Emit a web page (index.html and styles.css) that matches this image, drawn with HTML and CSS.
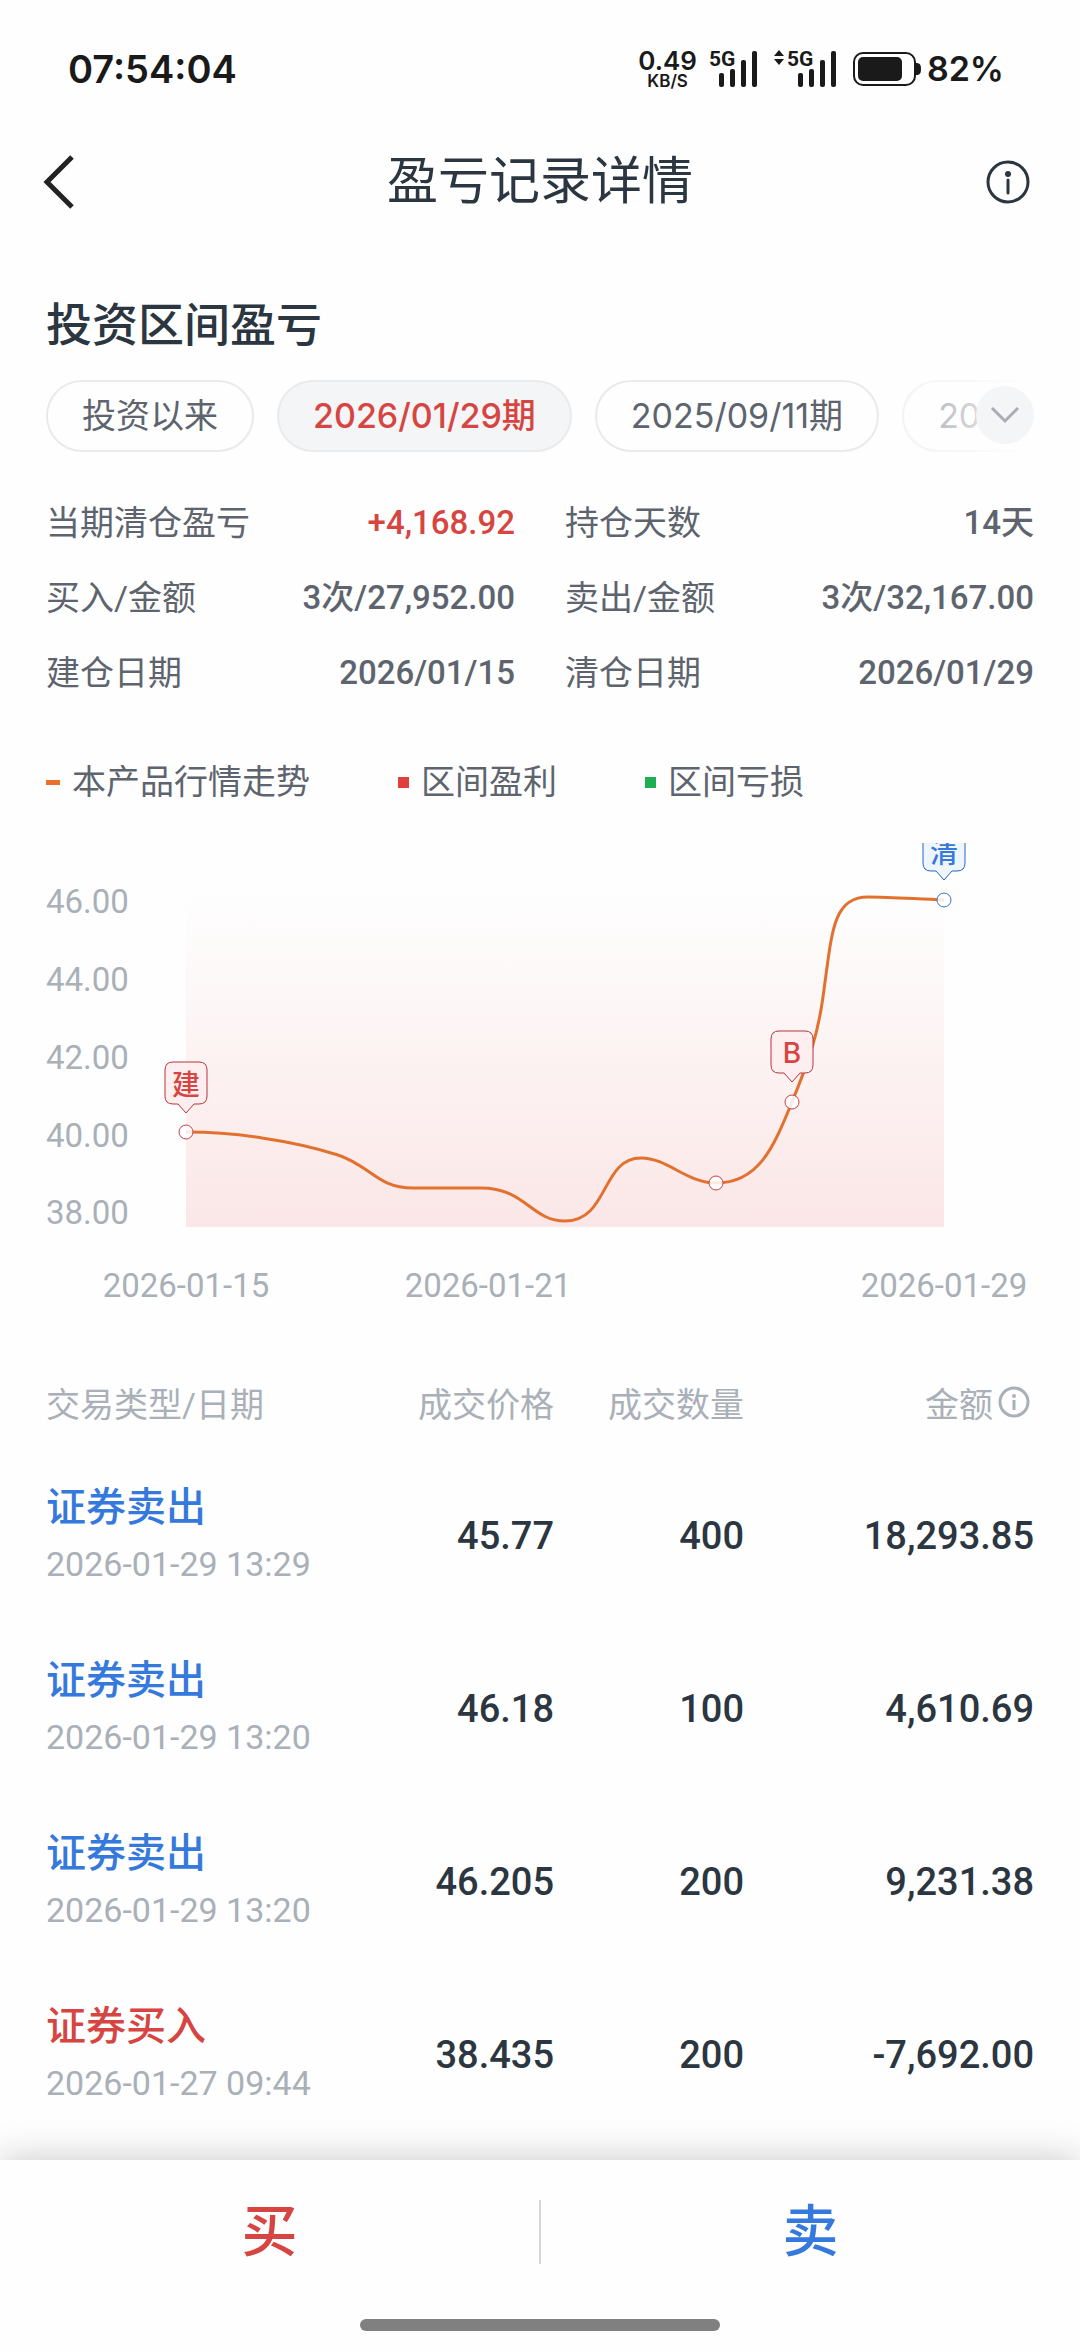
FILE: index.html
```html
<!DOCTYPE html>
<html lang="zh-CN">
<head>
  <meta charset="UTF-8">
  <meta name="viewport" content="width=device-width, initial-scale=1">
  <title>盈亏记录详情</title>
  <link rel="stylesheet" href="styles.css">
</head>
<body>

  <!-- Status bar -->
  <div class="status-bar">
    <span class="clock">07:54:04</span>
    <div class="status-right">
      <div class="speed"><span class="speed-num">0.49</span><span class="speed-unit">KB/S</span></div>
      <svg class="signal" width="49" height="38" viewBox="0 0 49 38">
        <text x="0" y="16">5G</text>
        <rect x="10" y="23" width="5" height="14" rx="2"/>
        <rect x="21" y="19" width="5" height="18" rx="2"/>
        <rect x="32" y="10" width="5" height="27" rx="2"/>
        <rect x="43" y="1" width="5" height="36" rx="2"/>
      </svg>
      <svg class="signal" width="63" height="38" viewBox="0 0 63 38">
        <path d="M5 0L10 6H0zM0 9H10L5 15z"/>
        <text x="13" y="16">5G</text>
        <rect x="24" y="23" width="5" height="14" rx="2"/>
        <rect x="35" y="19" width="5" height="18" rx="2"/>
        <rect x="46" y="10" width="5" height="27" rx="2"/>
        <rect x="57" y="1" width="5" height="36" rx="2"/>
      </svg>
      <svg class="battery" width="68" height="36" viewBox="0 0 68 36">
        <rect x="1" y="2" width="61" height="32" rx="9" fill="none" stroke="#1a1a1a" stroke-width="2"/>
        <rect x="5" y="6" width="44" height="24" rx="5"/>
        <path d="M63 12c4 0 5 2 5 6s-1 6-5 6z"/>
      </svg>
      <span class="percent">82%</span>
    </div>
  </div>

  <header class="header">
    <button type="button" class="icon-btn back" aria-label="返回">
      <svg width="34" height="56" viewBox="0 0 34 56" fill="none" stroke="#222" stroke-width="5"><path d="M30 3L5 28L30 53"/></svg>
    </button>
    <h1>盈亏记录详情</h1>
    <button type="button" class="icon-btn" aria-label="说明">
      <svg width="44" height="44" viewBox="0 0 44 44" fill="none" stroke="#2b3640" stroke-width="3"><circle cx="22" cy="22" r="20"/><path d="M22 20V33" stroke-linecap="round"/><circle cx="22" cy="14" r="3" fill="#2b3640" stroke="none"/></svg>
    </button>
  </header>

  <main class="content">
    <h2>投资区间盈亏</h2>

    <div class="periods">
      <div class="chips">
        <button type="button" class="chip">投资以来</button>
        <button type="button" class="chip active">2026/01/29期</button>
        <button type="button" class="chip">2025/09/11期</button>
        <button type="button" class="chip">2025/08/05期</button>
      </div>
      <div class="fade"></div>
      <button type="button" class="more" aria-label="更多">
        <svg width="30" height="18" viewBox="0 0 30 18" fill="none" stroke="#a9aeb5" stroke-width="3"><path d="M2 2L15 15L28 2"/></svg>
      </button>
    </div>

    <dl class="stats">
      <div><dt>当期清仓盈亏</dt><dd class="up">+4,168.92</dd></div>
      <div><dt>持仓天数</dt><dd>14天</dd></div>
      <div><dt>买入/金额</dt><dd>3次/27,952.00</dd></div>
      <div><dt>卖出/金额</dt><dd>3次/32,167.00</dd></div>
      <div><dt>建仓日期</dt><dd>2026/01/15</dd></div>
      <div><dt>清仓日期</dt><dd>2026/01/29</dd></div>
    </dl>

    <div class="legend">
      <span><i class="dash"></i>本产品行情走势</span>
      <span><i class="square red"></i>区间盈利</span>
      <span><i class="square green"></i>区间亏损</span>
    </div>

    <!-- Price chart -->
    <svg class="chart" viewBox="0 0 988 480">
      <defs>
        <linearGradient id="profit" x1="0" y1="0" x2="0" y2="1">
          <stop offset="0" stop-color="#e63c3c" stop-opacity="0"/>
          <stop offset="1" stop-color="#e63c3c" stop-opacity="0.12"/>
        </linearGradient>
      </defs>
      <rect x="140" y="50" width="758" height="334" fill="url(#profit)"/>

      <g class="axis">
        <text x="0" y="70">46.00</text>
        <text x="0" y="148">44.00</text>
        <text x="0" y="226">42.00</text>
        <text x="0" y="304">40.00</text>
        <text x="0" y="381">38.00</text>
      </g>
      <g class="axis axis-x">
        <text x="140" y="454">2026-01-15</text>
        <text x="442" y="454">2026-01-21</text>
        <text x="898" y="454">2026-01-29</text>
      </g>

      <path class="line" d="M140 289C165 289 191 291 216 295C250 300 270 305 292 312C325 323 331 345 367 345L435 345C480 345 485 378 519 378C563 378 555 315 595 315C622 315 640 340 670 340C712 340 727 306 746 259C764 215 772 190 777 154C786 90 786 54 822 54C845 54 870 56 898 57"/>

      <g class="dots">
        <circle cx="140" cy="289" r="7"/>
        <circle cx="670" cy="340" r="7"/>
        <circle cx="746" cy="259" r="7"/>
        <circle class="sell" cx="898" cy="57" r="7"/>
      </g>

      <g class="flag">
        <path d="M127 219h26q8 0 8 8v26q0 8-8 8h-5l-8 9l-8-9h-5q-8 0-8-8v-26q0-8 8-8z"/>
        <text x="140" y="252">建</text>
      </g>
      <g class="flag">
        <path d="M733 188h26q8 0 8 8v26q0 8-8 8h-5l-8 9l-8-9h-5q-8 0-8-8v-26q0-8 8-8z"/>
        <text x="746" y="220">B</text>
      </g>
      <g class="flag sell">
        <path d="M885-14h26q8 0 8 8v26q0 8-8 8h-5l-8 9l-8-9h-5q-8 0-8-8v-26q0-8 8-8z"/>
        <text x="898" y="20">清</text>
      </g>
    </svg>

    <table class="trades">
      <thead>
        <tr>
          <th>交易类型/日期</th>
          <th class="col-price">成交价格</th>
          <th class="col-count">成交数量</th>
          <th class="col-amount">
            <span class="amount-head">金额<svg width="32" height="32" viewBox="0 0 32 32" fill="none" stroke="#a9b0b8" stroke-width="3"><circle cx="16" cy="16" r="14"/><path d="M16 14V24"/><circle cx="16" cy="10" r="2" fill="#a9b0b8" stroke="none"/></svg></span>
          </th>
        </tr>
      </thead>
      <tbody>
        <tr>
          <td><div class="type sell">证券卖出</div><div class="date">2026-01-29 13:29</div></td>
          <td>45.77</td><td>400</td><td>18,293.85</td>
        </tr>
        <tr>
          <td><div class="type sell">证券卖出</div><div class="date">2026-01-29 13:20</div></td>
          <td>46.18</td><td>100</td><td>4,610.69</td>
        </tr>
        <tr>
          <td><div class="type sell">证券卖出</div><div class="date">2026-01-29 13:20</div></td>
          <td>46.205</td><td>200</td><td>9,231.38</td>
        </tr>
        <tr>
          <td><div class="type buy">证券买入</div><div class="date">2026-01-27 09:44</div></td>
          <td>38.435</td><td>200</td><td>-7,692.00</td>
        </tr>
      </tbody>
    </table>
  </main>

  <!-- Bottom actions -->
  <footer class="bottom-bar">
    <div class="actions">
      <button type="button" class="buy">买</button>
      <button type="button" class="sell">卖</button>
    </div>
    <div class="home-indicator"></div>
  </footer>

</body>
</html>
```
FILE: styles.css
```css
* {
  box-sizing: border-box;
}

body {
  margin: 0;
  padding-bottom: 192px;
  background: #fefefe;
  color: #5d646e;
  font-family: Roboto, "Noto Sans CJK SC", sans-serif;
  font-size: 34px;
}

h1, h2, dl, dd {
  margin: 0;
}

button {
  padding: 0;
  border: none;
  background: none;
  font-family: inherit;
  cursor: pointer;
}

svg {
  display: block;
}

/* Status bar */
.status-bar {
  display: flex;
  justify-content: space-between;
  align-items: center;
  height: 137px;
  padding: 0 76px 0 68px;
  color: #1a1a1a;
  font-family: Inter, sans-serif;
  font-weight: 600;
  font-size: 38px;
}

.status-right {
  display: flex;
  align-items: center;
}

.speed {
  display: flex;
  flex-direction: column;
  align-items: center;
  margin-right: 12px;
}

.speed-num {
  font-size: 26px;
  line-height: 24px;
}

.speed-unit {
  font-size: 17px;
  line-height: 16px;
}

.signal {
  margin-right: 16px;
  overflow: visible;
  fill: #1a1a1a;
  font-family: Roboto, sans-serif;
  font-weight: 700;
  font-size: 21px;
}

.battery {
  margin-right: 6px;
  fill: #1a1a1a;
}

.percent {
  font-size: 34px;
}

/* Header */
.header {
  display: flex;
  justify-content: space-between;
  align-items: center;
  height: 90px;
  padding: 0 42px;
}

.header h1 {
  color: #2b3640;
  font-size: 51px;
  font-weight: 400;
  line-height: 60px;
}

.icon-btn {
  display: flex;
  justify-content: center;
  width: 60px;
}

.icon-btn.back {
  justify-content: flex-start;
}

.content {
  padding: 0 46px;
}

h2 {
  margin: 68px 0 25px;
  color: #2b3640;
  font-size: 46px;
  font-weight: 500;
  line-height: 60px;
}

/* Period chips */
.periods {
  position: relative;
}

.chips {
  display: flex;
  gap: 23px;
  overflow: hidden;
}

.chip {
  flex: none;
  height: 72px;
  padding: 0 34px 6px;
  border: 2px solid #e9eaec;
  border-radius: 36px;
  color: #5d646e;
  font-family: Inter, "Noto Sans CJK SC", sans-serif;
  font-size: 34px;
}

.chip.active {
  background: #f4f5f7;
  color: #d64541;
  font-weight: 500;
}

.fade {
  position: absolute;
  top: 0;
  right: 0;
  width: 140px;
  height: 100%;
  background: linear-gradient(to right, rgba(254, 254, 254, 0.4), #fefefe);
}

.more {
  position: absolute;
  top: 6px;
  right: 0;
  display: flex;
  align-items: center;
  justify-content: center;
  width: 58px;
  height: 58px;
  border-radius: 50%;
  background: #f4f5f7;
}

/* Summary */
.stats {
  display: grid;
  grid-template-columns: 1fr 1fr;
  column-gap: 50px;
  margin-top: 33px;
}

.stats div {
  display: flex;
  justify-content: space-between;
  align-items: center;
  height: 75px;
}

.stats dt {
  padding-bottom: 5px;
}

.stats dd {
  font-size: 33px;
  font-weight: 500;
  line-height: 40px;
}

.stats .up {
  color: #d64541;
}

.legend {
  display: flex;
  gap: 88px;
  margin: 47px 0 36px;
  line-height: 50px;
}

.legend span {
  display: flex;
  align-items: center;
  gap: 12px;
}

.dash {
  width: 14px;
  height: 5px;
  background: #e8702a;
}

.square {
  width: 11px;
  height: 11px;
}

.red {
  background: #e0403c;
}

.green {
  background: #1fae54;
}

/* Chart */
.chart {
  width: 100%;
  overflow: hidden;
}

.axis {
  fill: #a9b0b8;
  font-size: 33px;
}

.axis-x {
  text-anchor: middle;
}

.line {
  fill: none;
  stroke: #e2712f;
  stroke-width: 3;
}

.dots circle {
  fill: #fff;
  fill-opacity: 0.85;
  stroke: #c0454a;
  stroke-width: 1;
}

.dots .sell {
  stroke: #3478cc;
}

.flag path {
  fill: #ffeeef;
  stroke: #b8343a;
  stroke-width: 1;
}

.flag text {
  fill: #d64541;
  font-family: Inter, "Noto Sans CJK SC", sans-serif;
  font-size: 28px;
  font-weight: 500;
  text-anchor: middle;
}

.flag.sell path {
  fill: #eef5ff;
  stroke: #2468bc;
}

.flag.sell text {
  fill: #3579dc;
}

/* Trades */
.trades {
  width: 100%;
  margin-top: 36px;
  border-collapse: collapse;
  table-layout: fixed;
}

.trades th {
  height: 90px;
  padding: 0 0 4px;
  color: #a9b0b8;
  font-weight: 400;
  text-align: right;
}

.trades td {
  height: 173px;
  padding: 0;
  color: #2b3640;
  font-size: 38px;
  font-weight: 500;
  text-align: right;
}

.trades th:first-child,
.trades td:first-child {
  text-align: left;
}

.col-price,
.col-count {
  width: 190px;
}

.col-amount {
  width: 290px;
}

.amount-head {
  display: flex;
  justify-content: flex-end;
  align-items: center;
  gap: 5px;
  padding-right: 4px;
}

.type {
  font-size: 40px;
  line-height: 56px;
}

.date {
  color: #a9b0b8;
  font-size: 34px;
  font-weight: 400;
  line-height: 56px;
}

.buy {
  color: #d64541;
}

.sell {
  color: #3579dc;
}

/* Bottom bar */
.bottom-bar {
  position: fixed;
  left: 0;
  right: 0;
  bottom: 0;
  height: 192px;
  background: #fefefe;
  box-shadow: 0 0 36px rgba(0, 0, 0, 0.22);
}

.actions {
  display: flex;
  align-items: center;
  height: 144px;
}

.actions button {
  flex: 1;
  height: 64px;
  font-size: 56px;
  font-weight: 500;
  line-height: 64px;
}

.actions .sell {
  border-left: 2px solid #d5d5d5;
}

.home-indicator {
  width: 33.33%;
  height: 12px;
  margin: 15px auto 0;
  border-radius: 6px;
  background: #808080;
}
```
